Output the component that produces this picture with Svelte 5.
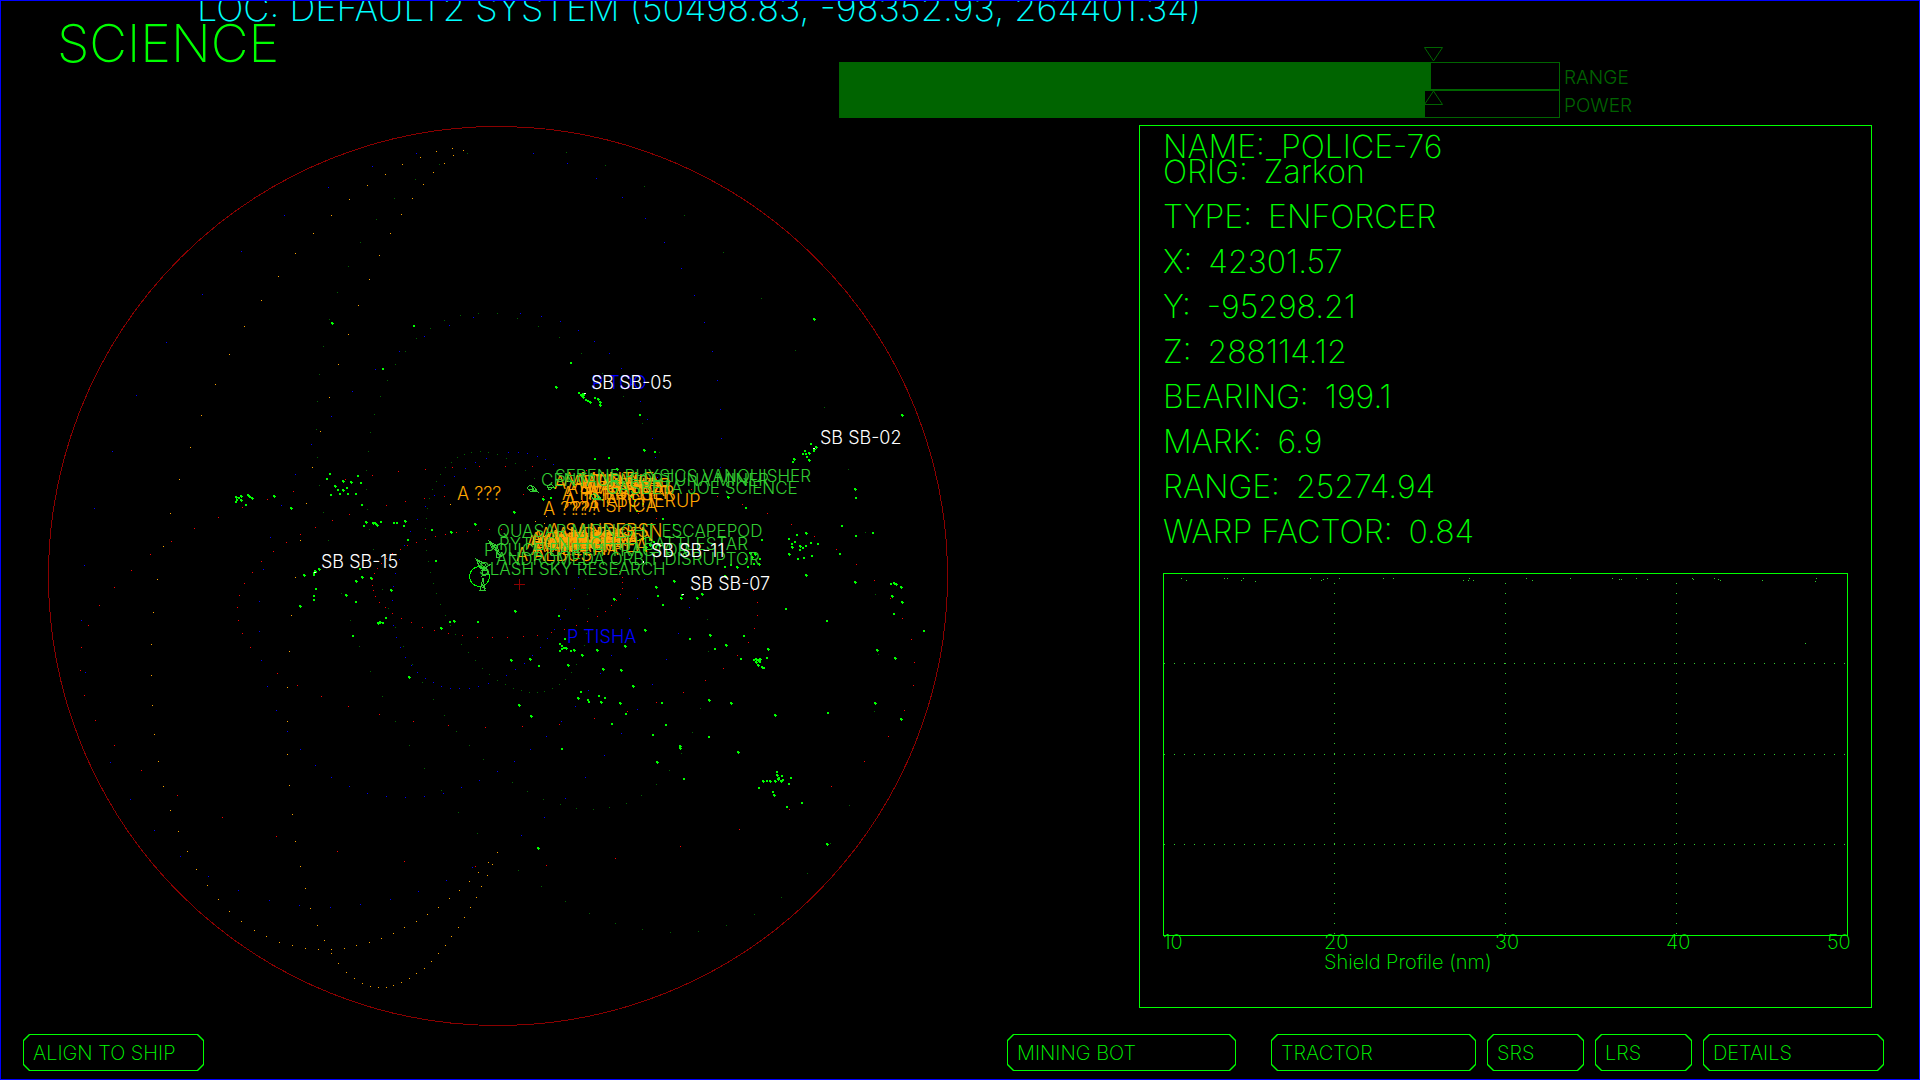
<script>
  const location = 'LOC: DEFAULT2 SYSTEM (50498.83, -98352.93, 264401.34)';

  let gauges = $state([
    { id: 'range', label: 'RANGE', value: 82.2 },
    { id: 'power', label: 'POWER', value: 81.4 }
  ]);

  const readings = [
    [['NAME', 'POLICE-76'], ['ORIG', 'Zarkon']],
    [['TYPE', 'ENFORCER']],
    [['X', '42301.57']],
    [['Y', '-95298.21']],
    [['Z', '288114.12']],
    [['BEARING', '199.1']],
    [['MARK', '6.9']],
    [['RANGE', '25274.94']],
    [['WARP FACTOR', '0.84']]
  ];

  const buttons = [
    { text: 'ALIGN TO SHIP', kind: 'align' },
    { text: 'MINING BOT', kind: 'mining' },
    { text: 'TRACTOR', kind: 'tractor' },
    { text: 'SRS', kind: 'short' },
    { text: 'LRS', kind: 'short' },
    { text: 'DETAILS', kind: 'details' }
  ];

  // Contacts and orbit marks, by sector: each has an origin and offsets in thirds of a unit.
  const sectors = [
    {
      x: 40, y: 120,
      orange: '1237,85 1270,91 1189,94 1240,106 1141,112 1213,130 1087,133 1180,157 1036,163 982,196 1150,193 928,238 1117,235 874,286 1084,283 820,340 1051,340 766,400 1018,406 715,469 988,478 664,541 955,556 613,619 925,643 568,703 895,733 526,793 868,832 484,886 841,934 451,982 817,1042 418,1078 799,1150 391,1180 781,1261 370,1279 1230,1154',
      blue: '1129,100 997,139 865,202 733,286 604,394 487,523 379,667 289,826 217,994 163,1165 1300,592 1228,616 1153,649 1078,694 1006,748 937,814 874,889 814,973 766,1063 724,1156 691,1252 1339,1015 1306,1027 1276,1045 1243,1069 1213,1096 1183,1126 1156,1159 1132,1198 1111,1234 1093,1276 1078,1318',
      dark: '1282,100 1198,133 1126,178 1063,235 1009,298 961,367 925,439 892,517 868,598 850,679 838,763 832,844 829,928 832,1012 838,1096 850,1177 865,1261 1372,580 1315,580 1261,586 1213,601 1171,625 1129,655 1096,694 1066,733 1042,781 1021,829 1003,883 991,937 985,994 979,1051 979,1108 982,1168 988,1228 1000,1288 1372,1003 1345,997 1321,994 1294,997 1273,1003 1252,1012 1234,1027 1216,1042 1201,1063 1189,1084 1177,1108 1168,1135 1162,1165 1159,1195 1156,1225 1159,1291',
      red: '1318,1039 1237,1042 1156,1048 1075,1054 997,1066 916,1078 760,1114 682,1138 607,1162 535,1192 463,1225 394,1264 331,1303 1213,1129 1153,1135 1096,1144 1039,1156 928,1183 877,1201 826,1222 781,1243 739,1267 700,1294 664,1324 1348,1228 1315,1231 1282,1234 1249,1237 1216,1243 1186,1249 1156,1258 1129,1267 1102,1276 1081,1288 1057,1300 1039,1315',
      lime: '877,610 1122,618 1029,747 861,1077 871,1063 954,1068 963,1089 933,1086 911,1084 887,1098 894,1110 909,1110 921,1105 902,1122 873,1125 926,1122 948,1122 588,1133 592,1140 598,1134 590,1146 603,1130 603,1142 624,1125 631,1133 636,1135 620,1156 702,1129 753,1164 968,1156 979,1206 1000,1209 1006,1209 1012,1215 1024,1206 973,1219 1064,1210 1072,1210 1097,1204 1094,1220 1106,1262 1178,1232 1234,1237 1307,1214'
    },
    {
      x: 500, y: 120,
      orange: '107,1203 140,1190 133,1210',
      blue: '100,100 202,130 289,175 367,232 436,295 493,367 544,445 583,526 613,607 637,694 652,781 661,868 664,955 661,1042 61,580 124,589 181,604 235,631 283,664 328,700 364,745 394,793 421,844 442,898 457,955 466,1012 472,1072 25,997 55,997 82,1000 112,1009 136,1018 160,1033',
      dark: '199,97 316,136 433,199 553,286 670,397 784,535 886,691 973,862 1045,1048 1096,1237 52,595 115,619 178,652 244,700 307,760 370,829 427,910 478,997 19,1015 46,1030 76,1051 103,1075',
      red: '16,1039 97,1039 178,1048 259,1051 574,1108 652,1129 727,1153 802,1180 874,1213 943,1249 1009,1288 70,1123 130,1129 247,1141 361,1165 415,1180 469,1195 5,1228 38,1228',
      lime: '942,597 213,731 168,801 1207,886 237,819 245,826 250,823 254,826 251,832 259,841 265,843 271,846 287,835 296,837 300,847 300,855 421,885 433,990 466,998 287,1017 327,1015 353,1048 933,973 915,993 910,1002 918,1004 927,1000 922,1012 928,1021 943,988 950,981 943,995 883,1018 880,1028 1065,1108 1069,1135 1026,1218 1068,1248 1119,1239 1020,1304 918,1239 868,1258 891,1247 885,1267 876,1272 876,1283 869,1302 902,1279 902,1290 910,1286 919,1279 933,1271 936,1308 912,1314 894,1318 954,1274 788,1260 740,1166 685,1132 413,1175 490,1198 523,1217 464,1268 430,1255 450,1260 435,1290 450,1275 420,1262 438,1283 470,1282 750,1299 738,1318 765,1304 782,1318 756,1311 42,1177 130,1137 165,1105 155,1135 395,1130 405,1145 430,1152 400,1160'
    },
    {
      x: 40, y: 560,
      orange: '352,58 340,157 334,253 334,346 337,436 343,523 355,604 370,679 391,751 415,814 442,874 469,928 502,976 535,1018 568,1054 604,1084 643,1111 679,1129 718,1147 757,1156 796,1165 835,1168 874,1168 913,1165 949,1156 988,1147 1024,1135 1060,1120 1093,1102 1129,1084 1162,1063 1195,1042 1228,1015 1258,991 1288,964 1315,937 1345,907 766,52 754,166 748,274 742,382 742,484 742,583 748,676 757,763 766,844 781,919 796,985 811,1045 832,1096 853,1141 874,1180 895,1210 919,1237 943,1255 967,1270 991,1279 1015,1282 1039,1282 1060,1276 1084,1267 1108,1255 1129,1240 1153,1225 1174,1204 1195,1180 1216,1156 1234,1129 1255,1102 1273,1072 1291,1042 1309,1012 1324,979 1342,946 1357,913 1372,877',
      blue: '133,16 124,181 136,337 211,607 271,718 343,811 421,889 505,949 595,991 688,1021 778,1036 871,1042 961,1033 1051,1018 1135,994 1219,961 1297,922 670,28 658,124 658,214 664,301 682,379 709,451 742,514 781,568 826,616 874,652 928,679 982,700 1039,709 1096,712 1153,709 1210,700 1264,682 1318,661 1372,634 1066,40 1060,79 1057,121 1060,196 1069,232 1081,262 1096,292 1114,316 1132,337 1156,355 1180,367 1204,379 1231,385 1258,385 1288,385 1315,379 1345,370',
      dark: '904,100 931,181 958,259 991,334 1027,409 1066,484 1108,556 1153,625 1204,691 1255,757 1312,820 1027,88 1045,145 1066,202 1090,259 1117,313 1147,367 1180,418 1213,466 1249,514 1288,556 1330,598 1165,4 1171,37 1180,70 1189,100 1201,133 1216,166 1231,196 1246,223 1264,253 1285,277 1306,301 1327,325 1348,343 1372,361',
      red: '274,31 223,82 178,136 145,196 124,262 121,331 133,406 166,481 223,556 304,631 412,706 547,772 709,829 892,874 1093,904 1306,919 664,4 637,37 613,70 598,106 592,142 595,181 607,220 631,262 712,340 772,376 844,409 925,439 1018,463 1120,484 1225,496 1336,502 1024,10 1012,25 1003,40 997,58 997,76 1000,91 1006,109 1018,127 1036,142 1057,160 1084,175 1114,187 1147,202 1183,211 1225,220 1267,226 1312,232 1357,232',
      lime: '822,40 826,34 823,47 830,38 838,27 794,45 830,88 822,108 822,120 780,139 948,63 966,51 993,54 960,28 918,105 948,126 1054,91 1015,190 1022,187 1030,190 1038,176 940,230 1109,352 1205,206 1232,186 1243,184 1314,186 1188,4'
    },
    {
      x: 500, y: 560,
      orange: '',
      blue: '235,52 223,85 211,118 196,148 181,178 163,208 142,235 121,262 97,286 73,310 46,328 19,346 433,58 412,115 388,175 334,286 301,340 265,391 226,439 184,484 139,529 91,568 43,604 595,61 568,142 535,220 499,298 457,373 412,448 364,520 313,586 256,652 196,715 133,772 64,826',
      dark: '256,58 262,103 265,145 259,220 253,256 229,313 214,337 196,358 178,373 157,385 133,394 112,397 88,397 64,391 40,385 16,373 613,79 622,178 625,274 601,445 577,517 544,580 508,631 469,673 424,706 379,730 328,742 280,748 229,745 181,733 130,718 82,694 37,667 1126,103 1135,283 1123,454 1048,736 991,850 922,940 844,1012 763,1063 679,1096 595,1114 511,1117 427,1108 346,1090 268,1060 196,1024 124,979 55,931',
      red: '358,34 367,52 367,67 367,85 361,103 349,121 334,136 316,154 292,169 262,184 229,196 193,208 154,217 112,226 70,229 22,232 742,58 760,91 772,127 772,166 763,205 745,247 712,286 670,325 616,361 550,397 469,427 382,454 283,475 178,493 67,499 1069,13 1123,61 1171,115 1207,175 1234,238 1243,307 1240,376 1213,451 1165,529 1093,604 994,679 868,748 718,808 541,859 346,895 139,916',
      lime: '677,48 468,81 524,63 474,108 489,135 543,116 547,107 591,114 608,103 1066,67 1174,74 1182,71 1189,72 1204,83 1177,108 1207,126 1182,164 918,45 859,149 981,183 343,118 47,154 178,170 435,210 195,237 182,252 187,259 192,264 186,268 181,275 199,266 214,274 222,271 246,287 291,272 375,260 90,297 117,319 35,302 204,317 310,327 365,330 399,380 570,238 630,225 645,267 678,255 732,228 725,297 804,267 803,295 762,300 768,299 775,302 780,299 770,307 782,306 776,315 787,322 792,324 1272,214 1131,272 1186,295 245,397 235,414 264,422 269,427 297,409 303,428 315,415 361,430 58,437 94,469 487,429 378,464 338,492 628,421 694,429 825,466 985,461 1127,430 1203,478 498,496 460,526 541,560 541,566 629,533 716,577 187,567 472,607 553,659 832,638 832,647 838,654 846,650 850,662 844,665 835,658 826,665 810,665 789,664 802,664 873,655 868,674 778,684 820,696 823,706 862,742 908,730 115,866 981,854 745,21 762,14 779,14 713,22 693,17 675,21'
    }
  ];

  function marks(kind) {
    let d = '';
    for (const s of sectors) {
      for (const pair of s[kind].split(' ').filter(Boolean)) {
        const [px, py] = pair.split(',').map(Number);
        const x = s.x + Math.floor(px / 3);
        const y = s.y + Math.floor(py / 3);
        // Asteroids are an irregular clump; orbit marks are a single point.
        d += kind === 'lime'
          ? ((px + py) % 2 ? `M${x - 1} ${y}h3v1h-3zM${x - 1} ${y - 1}h2v3h-1v-2h-1z` : `M${x - 1} ${y - 1}h2v2h-2z`)
          : `M${x} ${y}h1v1h-1z`;
      }
    }
    return d;
  }

  const layers = ['dark', 'blue', 'red', 'orange', 'lime'].map((kind) => ({ kind, d: marks(kind) }));

  const labels = [
    ['planet', 592, 389, 'P TOO'],
    ['planet', 567, 643, 'P TISHA'],
    ['rock', 457, 500, 'A ???'],
    ['rock', 543, 515, 'A ???'],
    ['rock', 572, 515, '???'],
    ['rock', 554, 489, 'A ARTEMIS'],
    ['rock', 563, 486, 'A MANTLE'],
    ['rock', 566, 494, 'A WASATCH'],
    ['rock', 574, 488, 'A TITANIA'],
    ['rock', 580, 492, 'A HATHOR'],
    ['rock', 584, 496, 'A HESTIA'],
    ['rock', 588, 499, 'A ESTHER'],
    ['rock', 562, 500, 'A HERMES'],
    ['rock', 564, 507, 'A THATCHERUP'],
    ['rock', 588, 512, 'A SPICA'],
    ['rock', 548, 537, 'A SANDERSN'],
    ['rock', 532, 544, 'A AMASSIN'],
    ['rock', 526, 549, 'A MATHIAS'],
    ['rock', 540, 541, 'A ANDERSEN'],
    ['rock', 536, 547, 'A HEKATE'],
    ['rock', 545, 551, 'A METIS'],
    ['rock', 552, 546, 'A EUREKA'],
    ['rock', 530, 546, 'A THEMIS'],
    ['rock', 534, 552, 'A AMALTHEA'],
    ['rock', 542, 548, 'A MINERVA'],
    ['rock', 531, 555, 'A HELENA'],
    ['rock', 516, 561, 'A ALBUS'],
    ['ship', 555, 482, 'SERENE PHYSICS VANQUISHER'],
    ['ship', 541, 486, 'CENTAURI FORTUNA MINER'],
    ['ship', 606, 494, 'GASBETA JOE SCIENCE'],
    ['ship', 497, 537, 'QUASAR MIDNIGHT ESCAPEPOD'],
    ['ship', 499, 550, 'PYTHON EIGHTH BATTLESTAR'],
    ['ship', 484, 556, 'POLICE EARTH TRACTOR'],
    ['ship', 496, 565, 'ANDROMEDA ORBIT DISRUPTOR'],
    ['ship', 479, 575, 'SLASH SKY RESEARCH'],
    ['base', 591, 389, 'SB SB-05'],
    ['base', 820, 444, 'SB SB-02'],
    ['base', 321, 568, 'SB SB-15'],
    ['base', 651, 557, 'SB SB-11'],
    ['base', 690, 590, 'SB SB-07']
  ];

  const columns = [171, 342, 513];
  const rows = [90, 181, 271];
  const ticks = [[0, '10'], [161, '20'], [332, '30'], [503, '40'], [664, '50']];
  const trace = [
    [18, 5], [23, 7], [61, 5], [64, 5], [78, 7], [80, 5], [92, 8], [147, 5], [158, 7], [160, 6], [164, 5], [176, 5],
    [220, 5], [230, 5], [300, 7], [305, 7], [306, 5], [310, 7], [363, 5], [369, 7], [407, 5], [449, 5], [456, 6],
    [458, 6], [473, 5], [484, 6], [529, 5], [530, 6], [551, 5], [555, 6], [557, 7], [599, 7], [652, 8], [653, 5], [642, 70]
  ];
</script>

<div class="screen">
  <header>
    <p class="loc">{location}</p>
    <div class="top">
      <h1>SCIENCE</h1>
      <div class="gauges">
        {#each gauges as gauge (gauge.id)}
          <div class="gauge">
            <div class="track">
              <input
                id={gauge.id}
                type="range"
                min="0"
                max="100"
                step="0.1"
                bind:value={gauge.value}
                style="--fill: {gauge.value}%"
              />
              <svg class="pointer {gauge.id}" width="19" height="15" viewBox="0 0 19 15" aria-hidden="true">
                {#if gauge.id === 'range'}
                  <path d="M.5.5h18L9.5 14z" />
                {:else}
                  <path d="M.5 14.5h18L9.5 1z" />
                {/if}
              </svg>
            </div>
            <label for={gauge.id}>{gauge.label}</label>
          </div>
        {/each}
      </div>
    </div>
  </header>

  <main>
    <svg class="radar" viewBox="48 125 900 901" role="img" aria-label="Long range scan">
      <circle class="rim" cx="498" cy="576" r="449.5" />
      {#each layers as layer (layer.kind)}
        <path class="mark {layer.kind}" d={layer.d} />
      {/each}
      <path class="cross" d="M514 584.5h11M519.500 579v11" />
      {#each labels as [kind, x, y, text]}
        <text class="label {kind}" {x} {y}>{text}</text>
      {/each}
      <circle class="own" cx="479.500" cy="576.500" r="10" />
      <g class="hull">
        <path d="M476 559l9 5 3 7-8-3zM476 559l12 12M478 565l8 6M481 571l10-7M484 566l5 8-7 2z" />
        <path d="M483 578l-3 12h5zM483 578l2 12M480 586l6 3M481 583l4 5" />
        <path d="M489 541l8 5 2 6-7-4zM489 541l9 10M491 547l9-3M496 552l6 4-6 2z" />
        <path d="M527 488l3-3 4 2 4 5-8-1zM528 489l9 2M531 486l4 5" />
        <path d="M591 496l3-3 5 3 3 4-8-1zM592 498l9 1M595 494l4 5" />
        <path d="M547 486l4-2 3 3-5 3zM547 488l7-1" />
      </g>
      <path class="beacon" d="M584 393h2v1h-2zM813 448h2v1h-2zM314 572h2v1h-2zM682 594h2v1h-2zM643 561h1v2h-1z" />
    </svg>

    <section class="panel" aria-label="Selected contact">
      <dl>
        {#each readings as group}
          <div class="group">
            {#each group as [name, value]}
              <div class="reading"><dt>{name}:</dt> <dd>{value}</dd></div>
            {/each}
          </div>
        {/each}
      </dl>
      <svg class="chart" viewBox="0 0 685 398" role="img" aria-label="Shield profile">
        <rect x=".5" y=".5" width="684" height="362" />
        {#each columns as x}
          <line class="grid" x1={x + 0.5} x2={x + 0.5} y1="10" y2="362" />
        {/each}
        {#each rows as y}
          <line class="grid" x1="1" x2="684" y1={y + 0.5} y2={y + 0.5} />
        {/each}
        {#each trace as [x, y]}
          <rect class="point" {x} {y} width="1" height="1" />
        {/each}
        {#each ticks as [x, text]}
          <text {x} y="376">{text}</text>
        {/each}
        <text x="161" y="396">Shield Profile (nm)</text>
      </svg>
    </section>
  </main>

  <footer>
    {#each buttons as button}
      <button type="button" class={button.kind}><span>{button.text}</span></button>
    {/each}
  </footer>
</div>

<style>
  :global(body) {
    background: #000;
  }

  .screen {
    box-sizing: border-box;
    min-height: 100vh;
    border: 1px solid #00f;
    background: #000;
    color: #0f0;
    font-family: Inter, 'Liberation Sans', sans-serif;
    font-weight: 200;
    display: flex;
    flex-direction: column;
    overflow: hidden;
  }

  .loc {
    margin: 0;
    padding-left: 196px;
    font-size: 36px;
    line-height: 14px;
    color: #0ff;
    white-space: nowrap;
  }

  .top {
    display: grid;
    grid-template-columns: 838fr 1080fr;
    align-items: start;
  }

  h1 {
    margin: 0;
    padding-left: 56px;
    font-size: 52px;
    line-height: 58px;
    font-weight: 200;
  }

  .gauges {
    padding-top: 47px;
    color: #006400;
  }

  .gauge {
    display: grid;
    grid-template-columns: 721fr 359fr;
    height: 28px;
  }

  .track {
    position: relative;
    display: flex;
  }

  input {
    appearance: none;
    box-sizing: border-box;
    width: 100%;
    height: 28px;
    margin: 0;
    border: 1px solid #006400;
    background: linear-gradient(to right, #006400 var(--fill), #000 var(--fill));
  }

  input::-webkit-slider-thumb {
    appearance: none;
    width: 1px;
    height: 26px;
    background: transparent;
  }

  .pointer {
    position: absolute;
    left: 82%;
    margin-left: -6px;
    fill: none;
    stroke: #006400;
  }

  .pointer.range {
    bottom: 100%;
  }

  .pointer.power {
    top: 0;
  }

  label {
    padding-left: 4px;
    font-size: 19px;
    font-weight: 300;
    line-height: 32px;
  }

  main {
    display: grid;
    grid-template-columns: 900fr 191fr 733fr;
    align-items: start;
    margin-top: 7px;
    padding: 0 47px;
  }

  .radar {
    width: 100%;
    overflow: visible;
  }

  .rim,
  .cross,
  .own,
  .hull {
    fill: none;
    stroke: #8b0000;
    shape-rendering: crispEdges;
  }

  .own {
    stroke: #0f0;
  }

  .hull {
    stroke: #32cd32;
  }

  .beacon {
    fill: #fff;
  }

  .mark {
    shape-rendering: crispEdges;
  }

  .dark {
    fill: #006400;
  }

  .blue {
    fill: #00f;
  }

  .red {
    fill: #f00;
  }

  .orange {
    fill: #ffa500;
  }

  .lime {
    fill: #0f0;
  }

  .label {
    font-size: 18px;
    font-weight: 300;
  }

  .planet {
    fill: #00f;
  }

  .rock {
    fill: #ffa500;
  }

  .ship {
    fill: #32cd32;
    font-size: 17px;
  }

  .base {
    fill: #fff;
  }

  .panel {
    grid-column: 3;
    border: 1px solid #0f0;
    padding: 8px 23px 36px;
  }

  dl {
    margin: 0 0 29px;
    display: flex;
    flex-direction: column;
    gap: 20px;
    font-size: 32px;
    line-height: 25px;
  }

  .reading {
    display: flex;
    gap: 16px;
  }

  dd {
    margin: 0;
  }

  .chart {
    display: block;
    width: 100%;
    overflow: visible;
    fill: none;
    stroke: #0f0;
    shape-rendering: crispEdges;
  }

  .chart .grid {
    stroke: #32cd32;
    stroke-dasharray: 1 9;
  }

  .chart .point {
    fill: #32cd32;
    stroke: none;
  }

  .chart text {
    fill: #0f0;
    stroke: none;
    font-size: 20px;
  }

  footer {
    display: flex;
    gap: 11px;
    margin-top: 8px;
    padding: 0 35px 8px 22px;
  }

  button {
    position: relative;
    height: 37px;
    padding: 0 10px;
    border: 0;
    background: #0f0;
    color: #0f0;
    font: inherit;
    font-size: 20px;
    text-align: left;
    white-space: nowrap;
    clip-path: polygon(6px 0, calc(100% - 6px) 0, 100% 6px, 100% calc(100% - 6px), calc(100% - 6px) 100%, 6px 100%, 0 calc(100% - 6px), 0 6px);
  }

  button::before {
    content: '';
    position: absolute;
    inset: 1px;
    background: #000;
    clip-path: polygon(6px 0, calc(100% - 6px) 0, 100% 6px, 100% calc(100% - 6px), calc(100% - 6px) 100%, 6px 100%, 0 calc(100% - 6px), 0 6px);
  }

  button span {
    position: relative;
  }

  .align,
  .details {
    min-width: 181px;
  }

  .align {
    margin-right: auto;
  }

  .mining {
    min-width: 229px;
    margin-right: 24px;
  }

  .tractor {
    min-width: 205px;
  }

  .short {
    min-width: 97px;
  }
</style>
